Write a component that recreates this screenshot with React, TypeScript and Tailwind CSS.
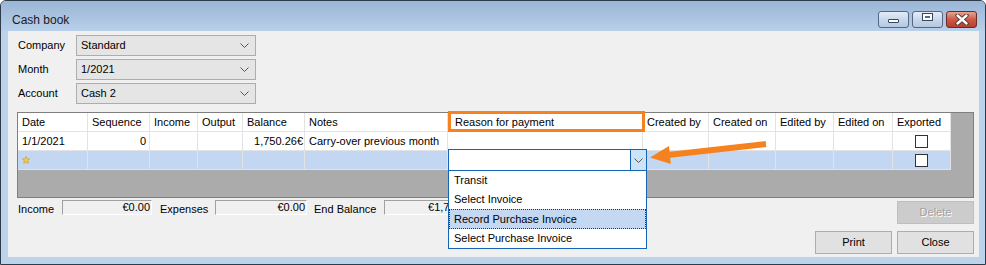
import React from 'react';

const headers = [
  'Date',
  'Sequence',
  'Income',
  'Output',
  'Balance',
  'Notes',
  'Reason for payment',
  'Created by',
  'Created on',
  'Edited by',
  'Edited on',
  'Exported',
];

const rowGrid =
  'grid grid-cols-[70px_62px_48px_45px_62px_143px_195px_66px_67px_58px_59px_58px]';
const cell =
  'h-[19px] border-r border-b border-[#e3e3e3] leading-[18px] px-[4px] whitespace-nowrap overflow-hidden';

const reasons = ['Transit', 'Select Invoice', 'Record Purchase Invoice', 'Select Purchase Invoice'];

function Chevron() {
  return (
    <svg width="9" height="5" viewBox="0 0 9 5">
      <path d="M0.5 0.5 L4.5 4.5 L8.5 0.5" fill="none" stroke="#555" strokeWidth="1" />
    </svg>
  );
}

function Combo({ label, value }: { label: string; value: string }) {
  return (
    <>
      <div className="pl-[1px]">{label}</div>
      <div className="h-[21px] flex items-center justify-between pl-[4px] pr-[6px] bg-[#e5e5e5] border border-[#adadad]">
        <span>{value}</span>
        <Chevron />
      </div>
    </>
  );
}

function Checkbox() {
  return <div className="w-[13px] h-[13px] border border-[#333] bg-white" />;
}

function Star() {
  return (
    <svg width="8" height="8" viewBox="0 0 10 10">
      <path
        d="M5 0.5 L6.3 3.6 L9.6 3.8 L7 5.9 L7.9 9.3 L5 7.4 L2.1 9.3 L3 5.9 L0.4 3.8 L3.7 3.6 Z"
        fill="#f7cf3a"
        stroke="#d19a18"
        strokeWidth="0.8"
      />
    </svg>
  );
}

function SunkenBox({ value, width }: { value: string; width: string }) {
  return (
    <div
      className={`${width} h-[15px] border border-t-[#a0a0a0] border-l-[#a0a0a0] border-b-white border-r-white text-right pr-[1px] leading-[13px]`}
    >
      {value}
    </div>
  );
}

export default function App() {
  return (
    <div className="relative w-[986px] h-[265px] flex flex-col border border-[#2e3b49] rounded-t-[6px] bg-[#bcd3ec] overflow-hidden font-['Liberation_Sans',Arial,sans-serif] text-[11px] text-black">
      {/* title bar */}
      <div className="h-[30px] flex items-start justify-between pl-[11px] pr-[8px] bg-linear-to-b from-[#9ab5d5] to-[#b9d0ea]">
        <div className="mt-[12px] leading-[14px] text-[12px] text-[#1b1b1b]">Cash book</div>
        <div className="mt-[10px] flex gap-[3px]">
          <div className="w-[31px] h-[17px] rounded-[3px] border border-[#56677f] bg-linear-to-b from-[#e4edf8] via-[#c8d8ec] to-[#b3c8e2] flex items-end justify-center pb-[4px]">
            <div className="w-[11px] h-[4px] bg-white border border-[#36455c] rounded-[1px]" />
          </div>
          <div className="w-[31px] h-[17px] rounded-[3px] border border-[#56677f] bg-linear-to-b from-[#e4edf8] via-[#c8d8ec] to-[#b3c8e2] flex items-start justify-center pt-[1px]">
            <div className="w-[11px] h-[8px] border border-[#36455c] bg-white p-[2px]">
              <div className="w-full h-full bg-[#5a6b84]" />
            </div>
          </div>
          <div className="w-[31px] h-[17px] rounded-[3px] border border-[#6e2a22] bg-linear-to-b from-[#e6a394] via-[#cd5946] to-[#b63f2d] flex items-center justify-center">
            <svg width="14" height="11" viewBox="0 0 14 11">
              <path d="M2.5 1.5 L11.5 9.5 M11.5 1.5 L2.5 9.5" stroke="#4a2a26" strokeWidth="4.2" strokeLinecap="round" />
              <path d="M2.5 1.5 L11.5 9.5 M11.5 1.5 L2.5 9.5" stroke="#ffffff" strokeWidth="2.4" strokeLinecap="round" />
            </svg>
          </div>
        </div>
      </div>

      {/* client area */}
      <div className="ml-[7px] w-[971px] h-[226px] bg-[#f0f0f0] pt-[4px] pl-[9px] flex flex-col">
        <div className="grid grid-cols-[59px_180px] gap-y-[3px] items-center">
          <Combo label="Company" value="Standard" />
          <Combo label="Month" value="1/2021" />
          <Combo label="Account" value="Cash 2" />
        </div>

        {/* data grid */}
        <div className="mt-[8px] w-[957px] h-[86px] border border-[#7f7f7f] bg-[#ababab]">
          <div className={`${rowGrid} w-[933px] bg-white`}>
            {headers.map((h) =>
              h === 'Reason for payment' ? (
                <div key={h} className="relative h-[19px] border-r border-b border-[#e3e3e3] leading-[18px] pl-[7px] whitespace-nowrap">
                  {h}
                  <div className="absolute top-[-2px] left-0 w-[197px] h-[21px] border-[3px] border-[#f5821f]" />
                </div>
              ) : (
                <div key={h} className={cell}>
                  {h}
                </div>
              )
            )}
          </div>
          <div className={`${rowGrid} w-[933px] bg-white`}>
            <div className={cell}>1/1/2021</div>
            <div className={`${cell} text-right pr-[3px]`}>0</div>
            <div className={cell} />
            <div className={cell} />
            <div className={`${cell} text-right pr-[1px]`}>1,750.26€</div>
            <div className={cell}>Carry-over previous month</div>
            <div className={cell} />
            <div className={cell} />
            <div className={cell} />
            <div className={cell} />
            <div className={cell} />
            <div className={`${cell} flex items-center justify-center`}>
              <Checkbox />
            </div>
          </div>
          <div className={`${rowGrid} w-[933px] bg-[#c3d7f2]`}>
            <div className={`${cell} flex items-center`}>
              <Star />
            </div>
            <div className={cell} />
            <div className={cell} />
            <div className={cell} />
            <div className={cell} />
            <div className={cell} />
            <div className="relative h-[19px] border-r border-b border-[#e3e3e3]">
              <div className="absolute left-0 top-[-2px] w-[199px] h-[22px] z-10 border border-[#1565b4] bg-white">
                <div className="absolute right-0 top-0 w-[16px] h-[20px] bg-[#cce4f7] border-l border-[#1565b4] flex items-center justify-center">
                  <Chevron />
                </div>
                <div className="absolute left-[-1px] top-[20px] w-[199px] border border-[#1565b4] bg-white">
                  {reasons.map((r) =>
                    r === 'Record Purchase Invoice' ? (
                      <div key={r} className="h-[20px] leading-[18px] pl-[4px] bg-[#c4d8f1] border border-dotted border-[#333]">
                        {r}
                      </div>
                    ) : (
                      <div key={r} className="h-[19px] leading-[19px] pl-[5px]">
                        {r}
                      </div>
                    )
                  )}
                </div>
              </div>
            </div>
            <div className={cell} />
            <div className={cell} />
            <div className={cell} />
            <div className={cell} />
            <div className={`${cell} flex items-center justify-center`}>
              <Checkbox />
            </div>
          </div>
        </div>

        {/* totals + delete */}
        <div className="mt-[2px] w-[957px] flex items-start justify-between">
          <div className="flex items-start">
            <div className="w-[45px] pl-[1px] mt-[2px] leading-[15px]">Income</div>
            <SunkenBox value="€0.00" width="w-[90px]" />
            <div className="w-[63px] pl-[8px] mt-[2px] leading-[15px]">Expenses</div>
            <SunkenBox value="€0.00" width="w-[92px]" />
            <div className="w-[77px] pl-[7px] mt-[2px] leading-[15px]">End Balance</div>
            <SunkenBox value="€1,750.26" width="w-[95px]" />
          </div>
          <div className="mt-[1px] w-[77px] h-[23px] bg-[#cccccc] border border-[#bfbfbf] flex items-center justify-center text-[#a2a2a2] [text-shadow:1px_1px_0_#ffffff]">
            Delete
          </div>
        </div>

        <div className="mt-[7px] w-[957px] flex justify-end gap-[5px]">
          <div className="w-[77px] h-[23px] bg-[#e1e1e1] border border-[#adadad] flex items-center justify-center">Print</div>
          <div className="w-[77px] h-[23px] bg-[#e1e1e1] border border-[#adadad] flex items-center justify-center">Close</div>
        </div>
      </div>

      {/* annotation arrow */}
      <svg className="absolute left-[-1px] top-[-1px] z-20 pointer-events-none" width="986" height="265" viewBox="0 0 986 265">
        <line x1="766" y1="144" x2="668" y2="155" stroke="#f5821f" strokeWidth="6" />
        <polygon points="650,157.5 670.8,164 669,146" fill="#f5821f" />
      </svg>
    </div>
  );
}
